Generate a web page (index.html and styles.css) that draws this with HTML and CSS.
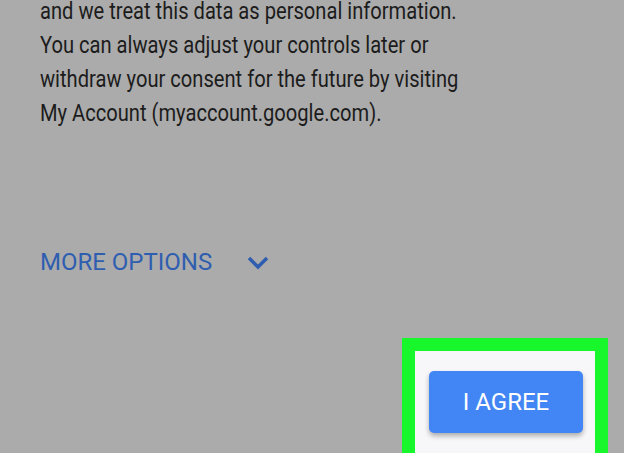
FILE: index.html
```html
<!DOCTYPE html>
<html>
<head>
  <title>Consent</title>
  <link rel="stylesheet" href="styles.css">
</head>
<body>
  <div class="consent">
    <p class="consent-text">and we treat this data as personal information.<br>
    You can always adjust your controls later or<br>
    withdraw your consent for the future by visiting<br>
    My Account (myaccount.google.com).</p>

    <div class="more-options">
      <span>MORE OPTIONS</span>
      <svg class="chevron" width="22" height="14" viewBox="0 0 22 14">
        <path d="M2 2 L11 11 L20 2" fill="none" stroke="#2f5eb0" stroke-width="3.5"/>
      </svg>
    </div>

    <div class="agree-row">
      <div class="highlight">
        <button class="agree-button">I AGREE</button>
      </div>
    </div>
  </div>
</body>
</html>
```

FILE: styles.css
```css
/* Consent screen, dimmed */
body {
  margin: 0;
  background-color: #ababab;
  font-family: Roboto, sans-serif;
  overflow: hidden;
}

.consent {
  padding: 0 0 0 40px;
}

.consent-text {
  margin: -5px 0 0 0;
  font-size: 23px;
  line-height: 34px;
  color: #1c1c1c;
  white-space: nowrap;
  transform: scaleX(0.875); /* the screenshot's body text is narrower than Roboto */
  transform-origin: left top;
}

.more-options {
  display: flex;
  align-items: center;
  margin-top: 117px;
  color: #2f5eb0;
  font-size: 24px;
}

.chevron {
  margin-left: 35px;
  margin-top: 2px;
}

.agree-row {
  display: flex;
  justify-content: flex-end;
  margin-top: 62px;
  padding-right: 16px;
}

.highlight {
  border: 13px solid #17f72b;
  border-bottom: none;
  background-color: #f7f7f9;
  padding: 20px 12px 40px 14px;
}

.agree-button {
  width: 154px;
  height: 62px;
  background-color: #4285f4;
  color: #fff;
  border: none;
  border-radius: 5px;
  font-family: Roboto, sans-serif;
  font-size: 24px;
  box-shadow: 0 3px 5px rgba(0, 0, 0, 0.3);
}
```
